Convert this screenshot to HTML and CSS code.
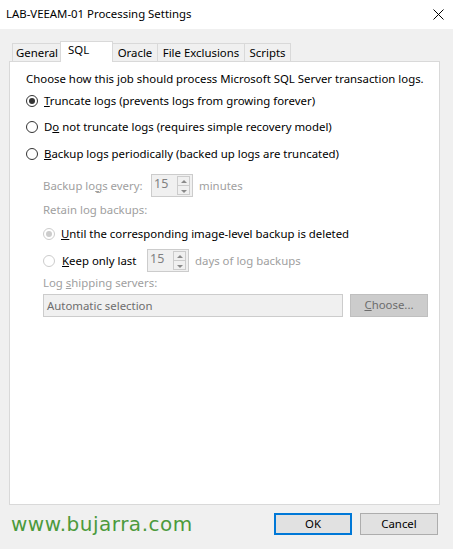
FILE: index.html
```html
<!DOCTYPE html>
<html>
<head>
    <title>LAB-VEEAM-01 Processing Settings</title>
    <link rel="stylesheet" href="styles.css">
</head>
<body>
    <div class="window">
        <div class="titlebar">
            <span class="title">LAB-VEEAM-01 Processing Settings</span>
            <svg class="close" width="11" height="11" viewBox="0 0 11 11">
                <path d="M0.5 0.5 L10.5 10.5 M10.5 0.5 L0.5 10.5" stroke="#000" stroke-width="1" fill="none"/>
            </svg>
        </div>

        <div class="body">
            <div class="tabs">
                <div class="tab general">General</div>
                <div class="tab active">SQL</div>
                <div class="tab oracle">Oracle</div>
                <div class="tab exclusions">File Exclusions</div>
                <div class="tab scripts">Scripts</div>
            </div>

            <div class="panel">
                <div class="intro">Choose how this job should process Microsoft SQL Server transaction logs.</div>

                <div class="option first">
                    <span class="radio checked"></span>
                    <span><u>T</u>runcate logs (prevents logs from growing forever)</span>
                </div>
                <div class="option">
                    <span class="radio"></span>
                    <span>D<u>o</u> not truncate logs (requires simple recovery model)</span>
                </div>
                <div class="option third">
                    <span class="radio"></span>
                    <span><u>B</u>ackup logs periodically (backed up logs are truncated)</span>
                </div>

                <div class="sub">
                    <div class="field-row every">
                        <span class="label every-label">Backup lo<u>g</u>s every:</span>
                        <div class="spin">
                            <span class="spin-value">15</span>
                            <span class="spin-btns">
                                <span class="arrow up"></span>
                                <span class="arrow down"></span>
                            </span>
                        </div>
                        <span class="label">minutes</span>
                    </div>

                    <div class="line retain">Retain log backups:</div>

                    <div class="option until">
                        <span class="radio disabled checked"></span>
                        <span><u>U</u>ntil the corresponding image-level backup is deleted</span>
                    </div>

                    <div class="field-row keep">
                        <span class="radio disabled"></span>
                        <span class="keep-label"><u>K</u>eep only last</span>
                        <div class="spin">
                            <span class="spin-value">15</span>
                            <span class="spin-btns">
                                <span class="arrow up"></span>
                                <span class="arrow down"></span>
                            </span>
                        </div>
                        <span class="label">days of log backups</span>
                    </div>

                    <div class="line shipping">Log <u>s</u>hipping servers:</div>

                    <div class="servers">
                        <div class="textbox">Automatic selection</div>
                        <div class="btn choose"><u>C</u>hoose...</div>
                    </div>
                </div>
            </div>

            <div class="footer">
                <div class="watermark">www.bujarra.com</div>
                <div class="buttons">
                    <div class="btn default">OK</div>
                    <div class="btn">Cancel</div>
                </div>
            </div>
        </div>
    </div>
</body>
</html>
```

FILE: styles.css
```css
:root {
    --bg: #f0f0f0;
    --line: #d9d9d9;
    --disabled: #a0a0a0;
    --text: #000;
}

body {
    margin: 0;
    background: var(--bg);
    font-family: 'Noto Sans', 'Open Sans', sans-serif;
    font-size: 11.4px;
    line-height: 16px;
    color: var(--text);
}

.window {
    width: 453px;
    height: 549px;
    overflow: hidden;
}

.titlebar {
    height: 29px;
    background: #fff;
    display: flex;
    align-items: center;
    justify-content: space-between;
    padding: 0 9px 1px 6px;
    box-sizing: border-box;
}

.body {
    padding: 12px 13px 0 9px;
}

/* tabs */
.tabs {
    display: flex;
    align-items: flex-end;
    height: 20px;
    padding-left: 3px;
    position: relative;
    z-index: 1;
    white-space: nowrap;
}

.tab {
    height: 18px;
    box-sizing: border-box;
    border: 1px solid var(--line);
    border-bottom: none;
    margin-right: -1px;
    line-height: 18px;
    background: var(--bg);
    text-align: center;
}

.tab.general { width: 50px; }
.tab.oracle { width: 46px; }
.tab.exclusions { width: 88px; }
.tab.scripts { width: 47px; }

.tab.active {
    height: 21px;
    margin-bottom: -1px;
    margin-left: -1px;
    background: #fff;
    width: 53px;
    line-height: 16px;
    text-align: left;
    padding-left: 7px;
}

.panel {
    height: 444px;
    box-sizing: border-box;
    border: 1px solid var(--line);
    background: #fff;
    padding: 9px 0 0 16px;
    white-space: nowrap;
}

.intro {
    height: 16px;
}

.option {
    display: flex;
    align-items: center;
    height: 16px;
    margin-top: 10px;
    gap: 6px;
}

.option.first { margin-top: 6px; }
.option.third { margin-top: 11px; }

.radio {
    width: 12px;
    height: 12px;
    box-sizing: border-box;
    border: 1px solid #333;
    border-radius: 50%;
    position: relative;
    flex: none;
}

.radio.checked::after {
    content: '';
    position: absolute;
    left: 2px;
    top: 2px;
    width: 6px;
    height: 6px;
    border-radius: 50%;
    background: #333;
}

.radio.disabled {
    border-color: #cccccc;
}

.radio.disabled.checked::after {
    background: #cccccc;
}

/* disabled group */
.sub {
    padding-left: 17px;
    color: var(--disabled);
    padding-top: 12px;
}

.field-row {
    display: flex;
    align-items: center;
    height: 23px;
}

.every-label { width: 108px; }
.every .spin { margin-right: 6px; }

.line {
    height: 16px;
}

.retain { margin-top: 5px; }

.until { margin-top: 8px; }
.until span:last-child { color: #000; }

.keep { margin-top: 7px; }
.keep .keep-label { width: 85px; margin-left: 7px; color: #000; }
.keep .spin { margin-right: 6px; }

.spin {
    width: 42px;
    height: 23px;
    box-sizing: border-box;
    border: 1px solid #cccccc;
    background: var(--bg);
    display: flex;
    justify-content: space-between;
    padding: 1px 1px 1px 2px;
    color: #808080;
    font-size: 12.5px;
    line-height: 16px;
}

.spin-btns {
    width: 13px;
    display: flex;
    flex-direction: column;
    border: 1px solid #cccccc;
    box-sizing: border-box;
    margin-right: 1px;
}

.arrow {
    flex: 1;
    position: relative;
}

.arrow.up { border-bottom: 1px solid #cccccc; }

.arrow::after {
    content: '';
    position: absolute;
    left: 3px;
    top: 3px;
    border-left: 3px solid transparent;
    border-right: 3px solid transparent;
}

.arrow.up::after { border-bottom: 3px solid #8a8a8a; }
.arrow.down::after { border-top: 3px solid #8a8a8a; top: 4px; }

.shipping { margin-top: 3px; }

.servers {
    display: flex;
    gap: 7px;
    margin-top: 3px;
}

.textbox {
    width: 300px;
    height: 23px;
    box-sizing: border-box;
    border: 1px solid #cccccc;
    background: var(--bg);
    color: #6d6d6d;
    padding: 3px 3px;
}

.btn {
    width: 78px;
    height: 22px;
    box-sizing: border-box;
    border: 1px solid #adadad;
    background: #e1e1e1;
    text-align: center;
    line-height: 20px;
    color: #000;
}

.btn.choose {
    height: 23px;
    background: #cccccc;
    border-color: #bfbfbf;
    color: #6d6d6d;
}

.btn.default {
    border: 2px solid #0078d7;
    line-height: 18px;
}

/* footer */
.footer {
    display: flex;
    justify-content: space-between;
    align-items: center;
    padding: 8px 0 0 2px;
}

.watermark {
    font-family: 'DejaVu Sans', sans-serif;
    font-size: 20px;
    letter-spacing: 0.5px;
    color: #4c9a3c;
}

.buttons {
    display: flex;
    gap: 8px;
    margin-right: 2px;
}
```
